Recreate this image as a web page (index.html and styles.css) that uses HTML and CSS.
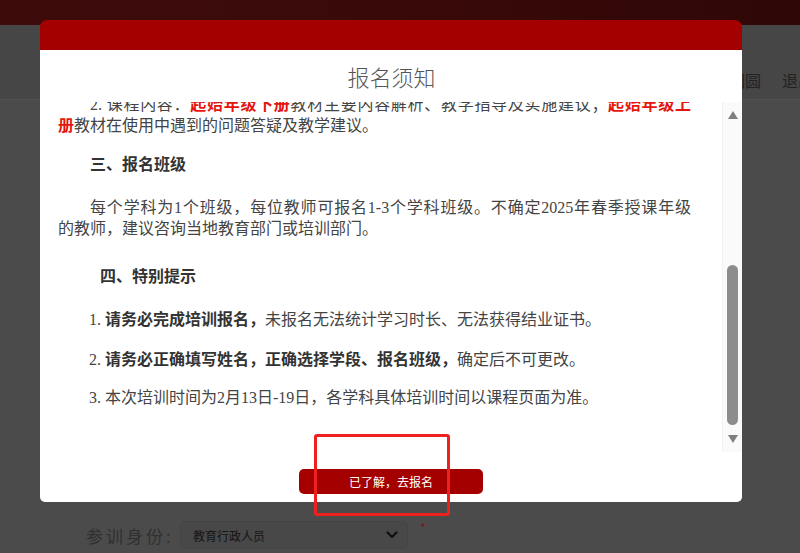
FILE: index.html
```html
<!DOCTYPE html>
<html lang="zh-CN">
<head>
<meta charset="utf-8">
<title>报名须知</title>
<link rel="stylesheet" href="styles.css">
</head>
<body>
<div class="topbar"></div>
<div class="header">
  <span class="user">李圆圆</span>
  <span class="logout">退出</span>
</div>
<div class="main">
  <div class="form-row">
    <span class="label">参训身份:</span>
    <div class="select">
      <span>教育行政人员</span>
      <svg class="chev" width="12" height="8" viewBox="0 0 12 8"><path d="M1.5 1.5 L6 6 L10.5 1.5" fill="none" stroke="#111" stroke-width="2.2" stroke-linecap="round" stroke-linejoin="round"/></svg>
    </div>
    <span class="req">*</span>
  </div>
</div>

<div class="modal">
  <div class="m-head"></div>
  <div class="m-body">
    <div class="m-title">报名须知</div>
    <div class="m-scroll">
      <div class="m-content">
        <div class="inner">
          <p class="para p1">
            <span class="jl first">2. 课程内容：<b class="red">起始年级下册</b>教材主要内容解析、教学指导及实施建议；<b class="red">起始年级上</b></span>
            <span class="jl last"><b class="red">册</b>教材在使用中遇到的问题答疑及教学建议。</span>
          </p>
          <p class="heading h3">三、报名班级</p>
          <p class="para p3">
            <span class="jl first">每个学科为1个班级，每位教师可报名1-3个学科班级。不确定2025年春季授课年级</span>
            <span class="jl last">的教师，建议咨询当地教育部门或培训部门。</span>
          </p>
          <p class="heading h4">四、特别提示</p>
          <p class="item i1">1. <b>请务必完成培训报名，</b>未报名无法统计学习时长、无法获得结业证书。</p>
          <p class="item i2">2. <b>请务必正确填写姓名，正确选择学段、报名班级，</b>确定后不可更改。</p>
          <p class="item i3">3. 本次培训时间为2月13日-19日，各学科具体培训时间以课程页面为准。</p>
        </div>
      </div>
      <div class="m-sbar">
        <div class="sb-btn"><span class="tri-up"></span></div>
        <div class="sb-track"><div class="sb-thumb"></div></div>
        <div class="sb-btn"><span class="tri-down"></span></div>
      </div>
    </div>
    <div class="m-foot">
      <button class="btn">已了解，去报名</button>
    </div>
  </div>
</div>

<div class="mark"></div>
</body>
</html>
```

FILE: styles.css
```css
html, body {
  margin: 0;
  padding: 0;
}
body {
  width: 800px;
  height: 553px;
  overflow: hidden;
  background: #4b4b4b;
  font-family: "Noto Sans CJK SC", sans-serif;
  position: relative;
}
.topbar {
  height: 25px;
  background: linear-gradient(90deg, #3e0b0b 0%, #380909 60%, #2f0707 100%);
}
.header {
  height: 75px;
  background: #464646;
  border-bottom: 1px solid #535353;
  box-sizing: border-box;
  display: flex;
  align-items: center;
  padding-left: 713px;
  padding-top: 35px;
  gap: 21px;
  white-space: nowrap;
  overflow: hidden;
  font-size: 16px;
  color: #222;
}
.main {
  padding-top: 421px;
}
.form-row {
  display: flex;
  align-items: center;
  height: 28px;
  padding-left: 86px;
}
.label {
  font-size: 17px;
  letter-spacing: 3px;
  color: #303030;
  width: 94px;
}
.select {
  width: 228px;
  height: 28px;
  box-sizing: border-box;
  background: #484848;
  border: 1px solid #444;
  border-radius: 6px;
  display: flex;
  align-items: center;
  justify-content: space-between;
  padding: 0 9px 0 12px;
  font-size: 12px;
  color: #141414;
}
.req {
  align-self: flex-start;
  margin-left: 12px;
  margin-top: -2px;
  font-size: 12px;
  color: #7a1616;
}

.modal {
  position: absolute;
  left: 40px;
  top: 20px;
  width: 702px;
  height: 482px;
  display: flex;
  flex-direction: column;
}
.m-head {
  height: 30px;
  background: #a50000;
  border-radius: 7px 7px 0 0;
}
.m-body {
  flex: 1;
  background: #fff;
  border-radius: 0 0 5px 5px;
  display: flex;
  flex-direction: column;
}
.m-title {
  height: 52px;
  line-height: 52px;
  text-align: center;
  font-size: 22px;
  font-weight: 300;
  color: #555;
  padding-left: 1px;
}
.m-scroll {
  height: 350px;
  display: flex;
}
.m-content {
  flex: 1;
  overflow: hidden;
  padding: 0 31px 0 18px;
}
.inner {
  margin-top: -8px;
  font-family: "Liberation Serif", "Noto Sans CJK SC", serif;
  font-size: 16px;
  line-height: 21px;
  color: #444;
}
.inner p {
  margin: 0;
}
.inner b {
  font-weight: bold;
  color: #333;
}
.inner b.red {
  color: #e5150f;
}
.jl {
  display: block;
  text-align: justify;
  text-align-last: justify;
}
.jl.first {
  padding-left: 32px;
}
.jl.last {
  text-align-last: left;
}
.heading {
  font-weight: bold;
  color: #333;
}
.h3 {
  margin-top: 18px !important;
  padding-left: 32px;
}
.p3 {
  margin-top: 22px !important;
}
.h4 {
  margin-top: 27px !important;
  padding-left: 42px;
}
.item {
  padding-left: 31px;
}
.i1 { margin-top: 22px !important; }
.i2 { margin-top: 19px !important; }
.i3 { margin-top: 17px !important; }

.m-sbar {
  width: 20px;
  background: #fafafa;
  border-left: 1px solid #f2f2f2;
  box-sizing: border-box;
  display: flex;
  flex-direction: column;
  align-items: center;
}
.sb-btn {
  height: 26px;
  width: 100%;
  display: flex;
  align-items: center;
  justify-content: center;
}
.tri-up {
  width: 0;
  height: 0;
  border-left: 5.5px solid transparent;
  border-right: 5.5px solid transparent;
  border-bottom: 8px solid #7f7f7f;
}
.tri-down {
  width: 0;
  height: 0;
  border-left: 5.5px solid transparent;
  border-right: 5.5px solid transparent;
  border-top: 8px solid #7f7f7f;
}
.sb-track {
  flex: 1;
  width: 100%;
  display: flex;
  justify-content: center;
}
.sb-thumb {
  margin-top: 137px;
  width: 11px;
  height: 160px;
  border-radius: 5.5px;
  background: #8c8c8c;
}
.m-foot {
  flex: 1;
  display: flex;
  justify-content: center;
  padding-top: 17px;
}
.btn {
  width: 184px;
  height: 25px;
  border: 0;
  border-radius: 5px;
  background: #a50000;
  color: #fff;
  font-family: "Noto Sans CJK SC", sans-serif;
  font-size: 12px;
  padding: 0;
  margin: 0;
}
.mark {
  position: absolute;
  left: 314px;
  top: 434px;
  width: 136px;
  height: 82px;
  box-sizing: border-box;
  border: 3.5px solid #ee2020;
  border-radius: 3px;
}
```
